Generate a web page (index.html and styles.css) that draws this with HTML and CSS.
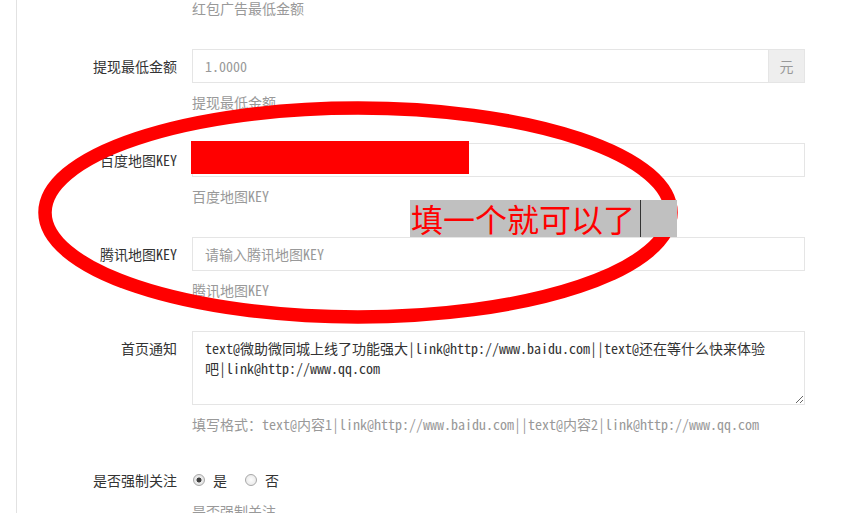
FILE: index.html
```html
<!DOCTYPE html>
<html lang="zh-CN">
<head>
    <meta charset="UTF-8">
    <meta name="viewport" content="width=device-width, initial-scale=1.0">
    <title>系统设置</title>
    <link rel="stylesheet" href="styles.css">
</head>
<body>
    <div class="page">
        <div class="panel">
            <form class="form">
                <div class="form-group">
                    <div class="control-label"></div>
                    <div class="controls">
                        <div class="help first">红包广告最低金额</div>
                    </div>
                </div>

                <div class="form-group">
                    <label class="control-label">提现最低金额</label>
                    <div class="controls">
                        <div class="input-group">
                            <input type="text" class="form-control" placeholder="1.0000">
                            <span class="addon">元</span>
                        </div>
                        <div class="help">提现最低金额</div>
                    </div>
                </div>

                <div class="form-group">
                    <label class="control-label">百度地图KEY</label>
                    <div class="controls">
                        <div class="input-wrap">
                            <input type="text" class="form-control" value="">
                            <!-- redacted key -->
                            <div class="redact"></div>
                        </div>
                        <div class="help">百度地图KEY</div>
                    </div>
                </div>

                <div class="form-group">
                    <label class="control-label">腾讯地图KEY</label>
                    <div class="controls">
                        <input type="text" class="form-control" placeholder="请输入腾讯地图KEY">
                        <div class="help">腾讯地图KEY</div>
                    </div>
                </div>

                <div class="form-group">
                    <label class="control-label">首页通知</label>
                    <div class="controls">
                        <textarea class="form-control notice">text@微助微同城上线了功能强大|link@http://www.baidu.com||text@还在等什么快来体验吧|link@http://www.qq.com</textarea>
                        <div class="help">填写格式：text@内容1|link@http://www.baidu.com||text@内容2|link@http://www.qq.com</div>
                    </div>
                </div>

                <div class="form-group radio-row">
                    <label class="control-label">是否强制关注</label>
                    <div class="controls">
                        <div class="radios">
                            <label class="radio-inline"><input type="radio" name="force" checked>是</label>
                            <label class="radio-inline"><input type="radio" name="force">否</label>
                        </div>
                        <div class="help">是否强制关注</div>
                    </div>
                </div>
            </form>
        </div>

        <!-- hand-drawn annotation on top of the form -->
        <svg class="circle" width="854" height="513" viewBox="0 0 854 513">
            <ellipse cx="358" cy="212.5" rx="313" ry="104.5" fill="none" stroke="#ff0000" stroke-width="13.5"/>
        </svg>
        <div class="note">填一个就可以了<span class="caret"></span></div>
    </div>
</body>
</html>
```

FILE: styles.css
```css
html, body {
    margin: 0;
    padding: 0;
    height: 100%;
    overflow: hidden;
    background: #fff;
}
body {
    font-family: "Noto Sans Mono CJK SC", "Noto Sans CJK SC", sans-serif;
    font-size: 14px;
    line-height: 20px;
    color: #333;
}
.page {
    position: relative;
    height: 513px;
}
.panel {
    margin-left: 16px;
    border-left: 1px solid #e2e2e2;
    min-height: 100%;
}
.form {
    margin: 0;
}
.form-group {
    display: flex;
    margin-bottom: 31px;
}
.control-label {
    width: 160px;
    margin-right: 15px;
    padding-top: 7px;
    text-align: right;
    color: #333;
}
.controls {
    width: 613px;
}
.help {
    margin-top: 9px;
    color: #999;
}
.help.first {
    margin-top: -2px;
}
.form-control {
    display: block;
    box-sizing: border-box;
    width: 100%;
    height: 34px;
    margin: 0;
    padding: 6px 12px;
    border: 1px solid #e5e5e5;
    border-radius: 0;
    font-family: inherit;
    font-size: 14px;
    line-height: 20px;
    color: #555;
    background: #fff;
    outline: none;
}
.form-control::placeholder {
    color: #999;
}
.input-group {
    display: flex;
}
.input-group .form-control {
    flex: 1;
}
.addon {
    box-sizing: border-box;
    width: 36px;
    height: 34px;
    line-height: 32px;
    text-align: center;
    color: #999;
    background: #eee;
    border: 1px solid #e5e5e5;
    border-left: none;
}
.input-wrap {
    position: relative;
}
.redact {
    position: absolute;
    left: -1px;
    top: -2px;
    width: 278px;
    height: 33px;
    background: #ff0000;
}
.notice {
    height: 74px;
    color: #333;
    resize: vertical;
}
.radio-row .control-label {
    padding-top: 5px;
}
.radios {
    display: flex;
    align-items: center;
    padding-top: 5px;
    height: 20px;
}
.radio-row .help {
    margin-top: 11px;
}
.radio-inline {
    display: inline-flex;
    align-items: center;
    gap: 8px;
    color: #333;
}
.radio-inline + .radio-inline {
    margin-left: 17px;
}
.radio-inline input {
    appearance: none;
    -webkit-appearance: none;
    box-sizing: border-box;
    width: 12px;
    height: 12px;
    margin: 0 0 0 1px;
    border: 1px solid #a8a8a8;
    border-radius: 50%;
    background: radial-gradient(circle, #fdfdfd 0, #e4e4e4 100%);
}
.radio-inline input:checked {
    background: radial-gradient(circle, #3f3f3f 0, #3f3f3f 2.2px, #ececec 2.8px, #dcdcdc 100%);
}
.circle {
    position: absolute;
    left: 0;
    top: 0;
    pointer-events: none;
}
.note {
    position: absolute;
    left: 410px;
    top: 200px;
    width: 267px;
    height: 37px;
    padding-left: 1px;
    box-sizing: border-box;
    background: #c0c0c0;
    color: #ff0000;
    font-family: "Noto Sans CJK SC", sans-serif;
    font-size: 32px;
    line-height: 37px;
    white-space: nowrap;
}
.caret {
    display: inline-block;
    width: 1px;
    height: 37px;
    margin-left: 5px;
    vertical-align: top;
    background: #333;
}
```
